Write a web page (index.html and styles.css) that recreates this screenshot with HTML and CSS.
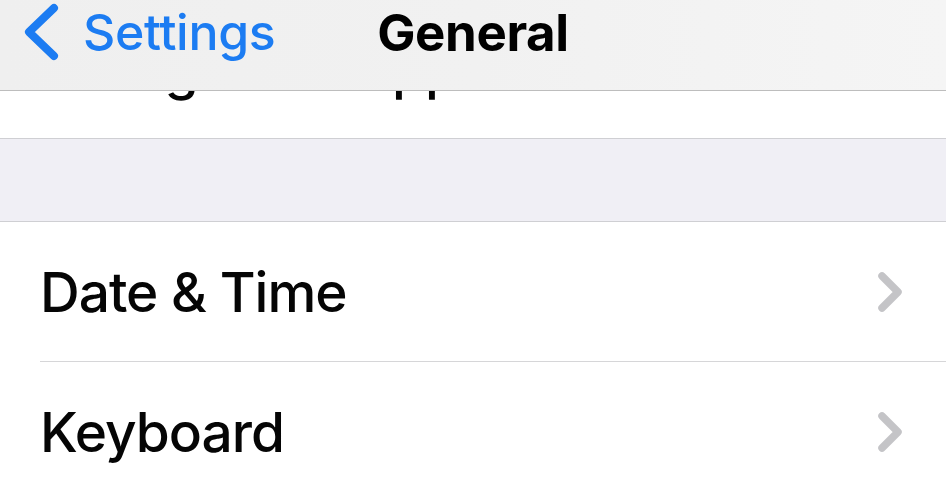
FILE: index.html
```html
<!DOCTYPE html>
<html lang="en">
<head>
  <meta charset="UTF-8">
  <meta name="viewport" content="width=device-width, initial-scale=1.0">
  <title>General</title>
  <link rel="stylesheet" href="styles.css">
</head>
<body>
  <div class="screen">
    <!-- Navigation bar, sits over the scrolled list -->
    <header class="navbar">
      <a class="back" href="#">
        <svg class="back-icon" width="40" height="64" viewBox="0 0 40 64">
          <path d="M34 8 L9 32 L34 56" fill="none" stroke="currentColor" stroke-width="8" stroke-linecap="round" stroke-linejoin="round"/>
        </svg>
        <span>Settings</span>
      </a>
      <h1 class="title">General</h1>
    </header>

    <!-- Scrolled-up group -->
    <ul class="group">
      <li class="row row-top">
        <span class="label">Background App Refresh</span>
      </li>
    </ul>

    <div class="gap"></div>

    <ul class="group">
      <li class="row">
        <span class="label">Date &amp; Time</span>
        <svg class="chevron" width="30" height="44" viewBox="0 0 30 44">
          <path d="M6 6 L22 22 L6 38" fill="none" stroke="currentColor" stroke-width="7.5" stroke-linecap="round" stroke-linejoin="round"/>
        </svg>
      </li>
      <li class="row">
        <span class="label">Keyboard</span>
        <svg class="chevron" width="30" height="44" viewBox="0 0 30 44">
          <path d="M6 6 L22 22 L6 38" fill="none" stroke="currentColor" stroke-width="7.5" stroke-linecap="round" stroke-linejoin="round"/>
        </svg>
      </li>
    </ul>
  </div>
</body>
</html>
```

FILE: styles.css
```css
/* General Styles */
* {
  box-sizing: border-box;
}

body {
  margin: 0;
  background: #fff;
  font-family: Inter, "Liberation Sans", sans-serif;
  color: #050505;
  overflow: hidden;
}

.screen {
  position: relative;
  width: 946px;
  height: 500px;
  overflow: hidden;
}

/* Navigation Bar */
.navbar {
  position: absolute;
  top: 0;
  left: 0;
  right: 0;
  z-index: 2;
  height: 91px;
  display: flex;
  align-items: center;
  justify-content: center;
  background: linear-gradient(90deg, #efefef 0%, #f1f1f1 50%, #f5f5f5 100%);
  border-bottom: 1px solid #bdbdbd;
}

.back {
  position: absolute;
  left: 20px;
  top: 0;
  height: 64px;
  display: flex;
  align-items: center;
  gap: 23px;
  color: #1c7cf2;
  text-decoration: none;
  font-size: 50px;
  font-weight: 500;
  letter-spacing: -0.3px;
}

.back-icon {
  display: block;
}

.title {
  margin: 0 0 26px;
  font-size: 51px;
  font-weight: 700;
  letter-spacing: -0.4px;
  color: #000;
}

/* Lists */
.group {
  list-style: none;
  margin: 0;
  padding: 0;
  background: #fff;
}

.row {
  height: 140px;
  margin-left: 40px;
  padding-right: 40px;
  display: flex;
  align-items: center;
  justify-content: space-between;
  border-bottom: 1px solid #d6d6d8;
}

.group .row:last-child {
  margin-left: 0;
  padding-left: 40px;
  border-bottom: none;
}

.row-top {
  height: 138px;
  align-items: flex-start;
  padding-top: 36px;
}

.row-top .label {
  word-spacing: -6px;
}

.label {
  font-size: 55px;
  font-weight: 500;
  letter-spacing: -1px;
}

.chevron {
  display: block;
  color: #c4c4c7;
}

/* Grey spacer between groups */
.gap {
  height: 84px;
  background: #f0eff5;
  border-top: 1px solid #cfcfd3;
  border-bottom: 1px solid #cfcfd3;
}
```
